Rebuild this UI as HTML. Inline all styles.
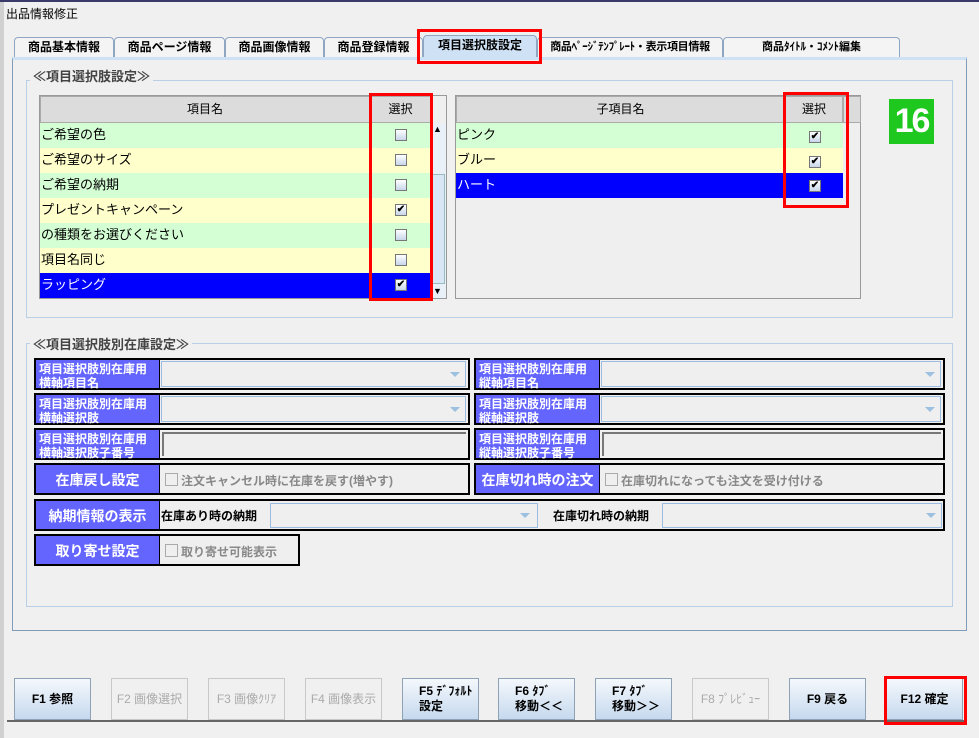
<!DOCTYPE html>
<html><head><meta charset="utf-8"><style>
*{box-sizing:border-box;margin:0;padding:0}
body{width:979px;height:738px;background:#f0f0f0;font-family:"Liberation Sans","Noto Sans CJK JP",sans-serif;font-size:13px;color:#000;position:relative;overflow:hidden}
.a{position:absolute}
.tab{position:absolute;top:37px;height:21px;border:1px solid #8ea6c2;border-bottom:none;background:#f4f4f4;font-weight:bold;font-size:12px;text-align:center;line-height:19px;border-radius:4px 4px 0 0;white-space:nowrap;overflow:hidden}
.red{position:absolute;border:3px solid #f00}
.hdr{position:absolute;top:96px;height:27px;background:#dcdcdc;border:1px solid #aaa;text-align:center;line-height:25px;font-size:12px}
.row{position:absolute;height:25px;line-height:24px;font-size:13px;padding-left:1px}
.g{background:#d4ffd4}.y{background:#ffffcc}.b{background:#0000ff;color:#fff}
.cb{position:absolute;width:12px;height:12px;border:1px solid #777;background:linear-gradient(#fff,#c8d6ea);font-size:10px;line-height:10px;text-align:center;font-weight:bold}
.lab{position:absolute;background:#6464ff;color:#fff;font-weight:bold;font-size:12px;line-height:14px;padding:2px 3px;border:2px solid #000;border-right:1px solid #000;white-space:nowrap}
.fld{position:absolute;border:2px solid #000;border-left:none;background:#efefef}
.combo{position:absolute;border:1px solid #9bbbe0;background:#efefef}
.arr{position:absolute;width:0;height:0;border-left:5px solid transparent;border-right:5px solid transparent;border-top:5px solid #9cc0e0}
.btn{position:absolute;top:678px;width:77px;height:42px;border:1px solid #8fa1b4;background:linear-gradient(#f4f8fc,#c6d9ee);font-weight:bold;font-size:12px;text-align:center;line-height:40px}
.dis{color:#aaa;background:#f0f0f0;border-color:#c8c8c8;font-weight:normal}
.two{line-height:15px;padding-top:5px;text-align:left;padding-left:16px}
.grey{color:#888;font-size:12px;font-weight:bold}
</style></head><body>
<div class="a" style="left:0;top:0;width:979px;height:2px;background:#3a3a6a"></div>
<div class="a" style="left:0;top:2px;width:4px;height:736px;background:#d0d0d0"></div>
<div class="a" style="left:6px;top:5px;font-size:12px">出品情報修正</div>

<div class="tab" style="left:14px;width:100px">商品基本情報</div>
<div class="tab" style="left:114px;width:111px">商品ページ情報</div>
<div class="tab" style="left:225px;width:99px">商品画像情報</div>
<div class="tab" style="left:324px;width:99px">商品登録情報</div>
<div class="tab" style="left:423px;width:114px;background:#cfe1f4;top:35px;height:23px">項目選択肢設定</div>
<div class="tab" style="left:537px;width:186px;font-size:11px;letter-spacing:-0.3px">商品ﾍﾟｰｼﾞﾃﾝﾌﾟﾚｰﾄ・表示項目情報</div>
<div class="tab" style="left:723px;width:177px;font-size:11px">商品ﾀｲﾄﾙ・ｺﾒﾝﾄ編集</div>
<div class="a" style="left:12px;top:57px;width:955px;height:574px;border:1px solid #7f9db9;border-top:3px solid #cfe1f4"></div>

<div class="a" style="left:26px;top:80px;width:927px;height:238px;border:1px solid #b8cfe5"></div>
<div class="a" style="left:30px;top:66px;background:#f0f0f0;padding:0 3px;font-weight:bold;font-size:13px;color:#444">≪項目選択肢設定≫</div>

<div class="a" style="left:39px;top:95px;width:408px;height:204px;border:1px solid #999;background:#efefef"></div>
<div class="hdr" style="left:40px;width:330px">項目名</div>
<div class="hdr" style="left:370px;width:61px">選択</div>
<div class="a" style="left:431px;top:124px;width:15px;height:174px;background:#eaf0f8"></div>
<div class="a" style="left:432px;top:174px;width:13px;height:110px;background:#d8e6f5;border:1px solid #9bb"></div>
<div class="a" style="left:433px;top:124px;font-size:9px">▲</div>
<div class="a" style="left:433px;top:286px;font-size:9px">▼</div>
<div class="row g" style="left:40px;top:123px;width:391px">ご希望の色</div>
<div class="row y" style="left:40px;top:148px;width:391px">ご希望のサイズ</div>
<div class="row g" style="left:40px;top:173px;width:391px">ご希望の納期</div>
<div class="row y" style="left:40px;top:198px;width:391px">プレゼントキャンペーン</div>
<div class="row g" style="left:40px;top:223px;width:391px">の種類をお選びください</div>
<div class="row y" style="left:40px;top:248px;width:391px">項目名同じ</div>
<div class="row b" style="left:40px;top:273px;width:391px">ラッピング</div>
<div class="cb" style="left:395px;top:129px"></div>
<div class="cb" style="left:395px;top:154px"></div>
<div class="cb" style="left:395px;top:179px"></div>
<div class="cb" style="left:395px;top:204px">✔</div>
<div class="cb" style="left:395px;top:229px"></div>
<div class="cb" style="left:395px;top:254px"></div>
<div class="cb" style="left:395px;top:279px">✔</div>
<div class="red" style="left:369px;top:93px;width:64px;height:208px"></div>

<div class="a" style="left:455px;top:95px;width:406px;height:204px;border:1px solid #999;background:#efefef"></div>
<div class="hdr" style="left:456px;width:329px">子項目名</div>
<div class="hdr" style="left:785px;width:58px">選択</div>
<div class="hdr" style="left:843px;width:18px"></div>
<div class="row g" style="left:456px;top:123px;width:387px">ピンク</div>
<div class="row y" style="left:456px;top:148px;width:387px">ブルー</div>
<div class="row b" style="left:456px;top:173px;width:387px">ハート</div>
<div class="cb" style="left:809px;top:131px">✔</div>
<div class="cb" style="left:809px;top:156px">✔</div>
<div class="cb" style="left:809px;top:180px">✔</div>
<div class="red" style="left:783px;top:92px;width:66px;height:116px"></div>
<div class="a" style="left:889px;top:99px;width:45px;height:45px;background:#1ec81e;color:#fff;font-weight:bold;font-size:34px;line-height:45px;text-align:center;letter-spacing:-2px">16</div>

<div class="a" style="left:26px;top:343px;width:927px;height:264px;border:1px solid #b8cfe5"></div>
<div class="a" style="left:30px;top:334px;background:#f0f0f0;padding:0 3px;font-weight:bold;font-size:13px;color:#444">≪項目選択肢別在庫設定≫</div>

<div class="lab" style="left:34px;top:358px;width:126px;height:32px">項目選択肢別在庫用<br>横軸項目名</div>
<div class="fld" style="left:160px;top:358px;width:310px;height:32px"><div class="combo" style="left:1px;top:1px;width:305px;height:26px"></div><div class="arr" style="left:290px;top:12px"></div></div>
<div class="lab" style="left:34px;top:393px;width:126px;height:32px">項目選択肢別在庫用<br>横軸選択肢</div>
<div class="fld" style="left:160px;top:393px;width:310px;height:32px"><div class="combo" style="left:1px;top:1px;width:305px;height:26px"></div><div class="arr" style="left:290px;top:12px"></div></div>
<div class="lab" style="left:34px;top:428px;width:126px;height:32px">項目選択肢別在庫用<br>横軸選択肢子番号</div>
<div class="fld" style="left:160px;top:428px;width:310px;height:32px"><div class="a" style="left:2px;top:2px;width:304px;height:24px;border-top:2px solid #777;border-left:2px solid #777;background:#eee"></div></div>
<div class="lab" style="left:34px;top:463px;width:126px;height:32px;font-size:14px;line-height:26px;text-align:center">在庫戻し設定</div>
<div class="fld" style="left:160px;top:463px;width:310px;height:32px"><div class="a" style="left:5px;top:8px;width:13px;height:13px;border:1px solid #aaa"></div><div class="a grey" style="left:21px;top:7px">注文キャンセル時に在庫を戻す(増やす)</div></div>

<div class="lab" style="left:474px;top:358px;width:126px;height:32px">項目選択肢別在庫用<br>縦軸項目名</div>
<div class="fld" style="left:600px;top:358px;width:345px;height:32px"><div class="combo" style="left:1px;top:1px;width:340px;height:26px"></div><div class="arr" style="left:325px;top:12px"></div></div>
<div class="lab" style="left:474px;top:393px;width:126px;height:32px">項目選択肢別在庫用<br>縦軸選択肢</div>
<div class="fld" style="left:600px;top:393px;width:345px;height:32px"><div class="combo" style="left:1px;top:1px;width:340px;height:26px"></div><div class="arr" style="left:325px;top:12px"></div></div>
<div class="lab" style="left:474px;top:428px;width:126px;height:32px">項目選択肢別在庫用<br>縦軸選択肢子番号</div>
<div class="fld" style="left:600px;top:428px;width:345px;height:32px"><div class="a" style="left:2px;top:2px;width:339px;height:24px;border-top:2px solid #777;border-left:2px solid #777;background:#eee"></div></div>
<div class="lab" style="left:474px;top:463px;width:126px;height:32px;font-size:14px;line-height:26px;text-align:center">在庫切れ時の注文</div>
<div class="fld" style="left:600px;top:463px;width:345px;height:32px"><div class="a" style="left:5px;top:8px;width:13px;height:13px;border:1px solid #aaa"></div><div class="a grey" style="left:21px;top:7px">在庫切れになっても注文を受け付ける</div></div>

<div class="lab" style="left:34px;top:499px;width:126px;height:32px;font-size:14px;line-height:26px;text-align:center">納期情報の表示</div>
<div class="fld" style="left:160px;top:499px;width:785px;height:32px">
<div class="a" style="left:1px;top:6px;font-weight:bold;font-size:12px">在庫あり時の納期</div>
<div class="combo" style="left:110px;top:2px;width:268px;height:25px"></div><div class="arr" style="left:360px;top:12px"></div>
<div class="a" style="left:393px;top:6px;font-weight:bold;font-size:12px">在庫切れ時の納期</div>
<div class="combo" style="left:502px;top:2px;width:280px;height:25px"></div><div class="arr" style="left:766px;top:12px"></div>
</div>
<div class="lab" style="left:34px;top:534px;width:126px;height:32px;font-size:14px;line-height:26px;text-align:center">取り寄せ設定</div>
<div class="fld" style="left:160px;top:534px;width:140px;height:32px"><div class="a" style="left:5px;top:8px;width:13px;height:13px;border:1px solid #aaa"></div><div class="a grey" style="left:21px;top:7px">取り寄せ可能表示</div></div>

<div class="a" style="left:7px;top:720px;width:958px;height:2px;background:#666"></div>
<div class="btn" style="left:14px">F1 参照</div>
<div class="btn dis" style="left:111px">F2 画像選択</div>
<div class="btn dis" style="left:208px">F3 画像ｸﾘｱ</div>
<div class="btn dis" style="left:305px">F4 画像表示</div>
<div class="btn two" style="left:402px">F5 ﾃﾞﾌｫﾙﾄ<br>設定</div>
<div class="btn two" style="left:498px">F6 ﾀﾌﾞ<br>移動＜＜</div>
<div class="btn two" style="left:595px">F7 ﾀﾌﾞ<br>移動＞＞</div>
<div class="btn dis" style="left:692px">F8 ﾌﾟﾚﾋﾞｭｰ</div>
<div class="btn" style="left:789px">F9 戻る</div>
<div class="btn" style="left:886px">F12 確定</div>
<div class="red" style="left:884px;top:676px;width:83px;height:49px"></div>
<div class="red" style="left:417px;top:29px;width:125px;height:35px"></div>
</body></html>
